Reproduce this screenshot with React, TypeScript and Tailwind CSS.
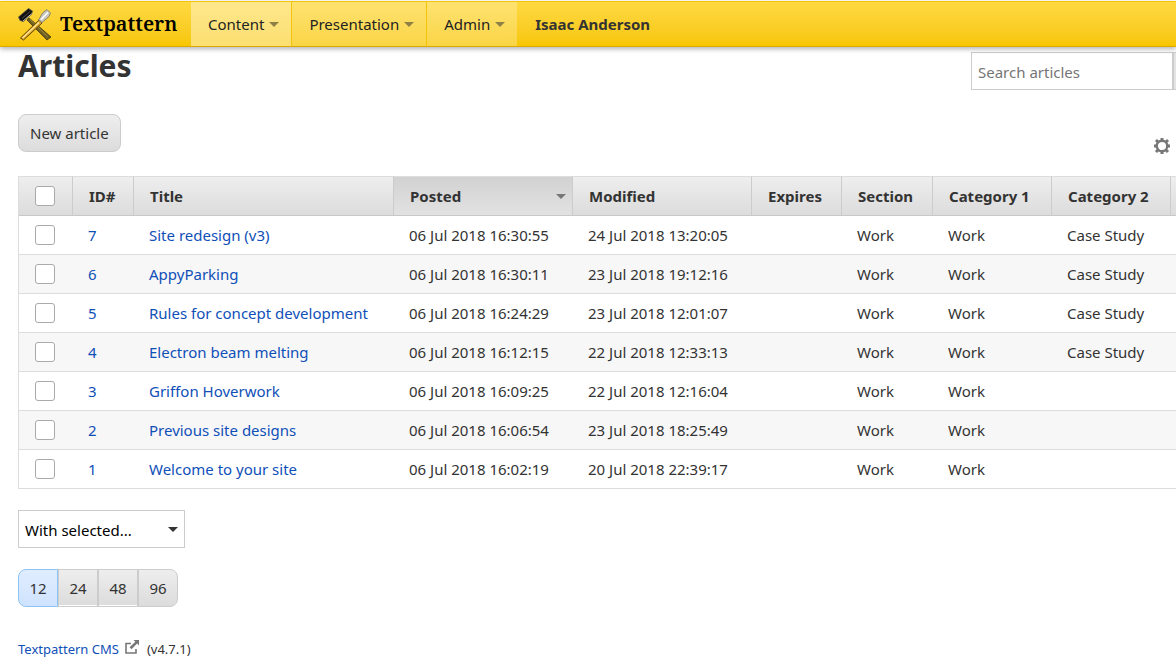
import React from "react";

type Article = {
  id: number;
  title: string;
  posted: string;
  modified: string;
  category2: string;
};

const articles: Article[] = [
  { id: 7, title: "Site redesign (v3)", posted: "06 Jul 2018 16:30:55", modified: "24 Jul 2018 13:20:05", category2: "Case Study" },
  { id: 6, title: "AppyParking", posted: "06 Jul 2018 16:30:11", modified: "23 Jul 2018 19:12:16", category2: "Case Study" },
  { id: 5, title: "Rules for concept development", posted: "06 Jul 2018 16:24:29", modified: "23 Jul 2018 12:01:07", category2: "Case Study" },
  { id: 4, title: "Electron beam melting", posted: "06 Jul 2018 16:12:15", modified: "22 Jul 2018 12:33:13", category2: "Case Study" },
  { id: 3, title: "Griffon Hoverwork", posted: "06 Jul 2018 16:09:25", modified: "22 Jul 2018 12:16:04", category2: "" },
  { id: 2, title: "Previous site designs", posted: "06 Jul 2018 16:06:54", modified: "23 Jul 2018 18:25:49", category2: "" },
  { id: 1, title: "Welcome to your site", posted: "06 Jul 2018 16:02:19", modified: "20 Jul 2018 22:39:17", category2: "" },
];

function Caret({ className }: { className: string }) {
  return (
    <svg viewBox="0 0 10 5" className={`h-[5px] w-[10px] shrink-0 ${className}`} aria-hidden="true">
      <path d="M0 0h10L5 5z" fill="currentColor" />
    </svg>
  );
}

function Logo() {
  return (
    <svg viewBox="0 0 34 34" className="h-[34px] w-[34px] shrink-0" aria-hidden="true">
      <path d="M11 11L33 30L29 33L9 13z" fill="#6f5f22" stroke="#3d3410" strokeWidth="0.800" />
      <path d="M12 12.500L29.500 29.500" stroke="#a08d3c" strokeWidth="1" />
      <path d="M0.500 10L10.500 1.500L14.500 4L13.500 7.200L5.500 14.500L2 13.500z" fill="#111" stroke="#55534c" strokeWidth="0.800" />
      <path d="M4 11.500L12 4.500" stroke="#4a4a4a" strokeWidth="1" />
      <path d="M5 14L13.500 6.800" stroke="#c9c5b4" strokeWidth="1" />
      <path d="M21 13L24 16L5.500 33L2.500 31z" fill="#e0a82c" stroke="#5f4508" strokeWidth="1" />
      <path d="M4.500 31L21 15.500" stroke="#ffe79a" strokeWidth="1.200" />
      <path d="M20.500 13L24.500 6L29 2.500L32.500 6L31 9.500L24 15.500z" fill="#c9c6bd" stroke="#77735f" strokeWidth="0.800" />
      <path d="M23 12.500L30 5.500" stroke="#fff" strokeWidth="1.600" />
    </svg>
  );
}

function Header() {
  return (
    <header className="relative z-10 mt-px flex h-[46px] items-stretch border-t border-b border-t-[#f5c40a] border-b-[#dba900] bg-linear-to-b from-[#ffd940] to-[#f7c600] shadow-[0_2px_5px_rgba(0,0,0,0.3)]">
      <a href="#home" className="flex w-[191px] items-center gap-2 pl-[18px] font-['Noto_Serif','DejaVu_Serif_Condensed','DejaVu_Serif',serif] text-xl font-semibold text-black">
        <Logo />
        Textpattern
      </a>
      <nav className="flex text-[15px] text-[#222]">
        <button className="flex items-center gap-[5px] border-r border-[#f5c40a] bg-linear-to-b from-[#ffe78c] to-[#fbdf70] pr-3 pl-[17px]">
          Content
          <Caret className="text-[#8f8146]" />
        </button>
        <button className="flex items-center gap-[5px] border-r border-[#f5c40a] bg-linear-to-b from-[#ffe270] to-[#f9d544] pr-3 pl-[17px]">
          Presentation
          <Caret className="text-[#8f8146]" />
        </button>
        <button className="flex items-center gap-[5px] bg-linear-to-b from-[#ffe270] to-[#f9d544] pr-3 pl-[17px]">
          Admin
          <Caret className="text-[#8f8146]" />
        </button>
      </nav>
      <a href="#profile" className="flex items-center pl-[18px] text-[15px] font-bold text-[#333]">
        Isaac Anderson
      </a>
    </header>
  );
}

const box = "block size-5 appearance-none rounded-[3px] border border-[#aaa] bg-white checked:bg-[#0f4fb8]";
const th = "border-t border-r border-b border-t-[#ddd] border-r-[#ccc] border-b-[#c8c8c8] bg-linear-to-b from-[#eee] to-[#dcdcdc] pl-4 text-left font-bold";
const td = "border-b border-[#ddd] pl-[15px]";

function ArticleTable() {
  return (
    <div className="overflow-hidden">
      <table className="w-full table-fixed border-separate border-spacing-0 border-l border-[#ddd] text-[15px] leading-5 whitespace-nowrap">
        <colgroup>
          <col className="w-[54px]" />
          <col className="w-[61px]" />
          <col className="w-[260px]" />
          <col className="w-[179px]" />
          <col className="w-[179px]" />
          <col className="w-[90px]" />
          <col className="w-[91px]" />
          <col className="w-[119px]" />
          <col className="w-[119px]" />
          <col />
        </colgroup>
        <thead>
          <tr className="h-10">
            <th className={th}>
              <input type="checkbox" aria-label="Select all articles" className={box} />
            </th>
            <th className={th}>ID#</th>
            <th className={th}>Title</th>
            <th className="border-t border-r border-b border-t-[#ddd] border-r-[#ccc] border-b-[#c8c8c8] bg-linear-to-b from-[#d2d2d2] to-[#e2e2e2] pr-[6px] pl-4 text-left font-bold">
              <span className="flex items-center justify-between">
                Posted
                <Caret className="text-[#777]" />
              </span>
            </th>
            <th className={th}>Modified</th>
            <th className={th}>Expires</th>
            <th className={th}>Section</th>
            <th className={th}>Category 1</th>
            <th className={th}>Category 2</th>
            <td className="border-t border-b border-t-[#ddd] border-b-[#c8c8c8] bg-linear-to-b from-[#eee] to-[#dcdcdc]" />
          </tr>
        </thead>
        <tbody>
          {articles.map((a) => (
            <tr key={a.id} className="h-[39px] even:bg-[#f7f7f7]">
              <td className="border-b border-[#ddd] pl-4">
                <input type="checkbox" aria-label={`Select ${a.title}`} className={box} />
              </td>
              <td className={td}>
                <a href={`#article-${a.id}`} className="text-[#0f4fb8]">{a.id}</a>
              </td>
              <td className={td}>
                <a href={`#article-${a.id}`} className="text-[#0f4fb8]">{a.title}</a>
              </td>
              <td className={td}>{a.posted}</td>
              <td className={td}>{a.modified}</td>
              <td className={td} />
              <td className={td}>Work</td>
              <td className={td}>Work</td>
              <td className={td}>{a.category2}</td>
              <td className="border-b border-[#ddd]" />
            </tr>
          ))}
        </tbody>
      </table>
    </div>
  );
}

const pageSize = "w-10 border border-[#ccc] bg-linear-to-b from-[#eee] to-[#dcdcdc] shadow-[inset_0_-1px_#fff]";

export default function App() {
  return (
    <div className="overflow-x-hidden bg-white font-['Noto_Sans','Open_Sans',sans-serif] text-[15px] text-[#333]">
      <Header />
      <main className="pt-[5px] pl-[18px]">
        <div className="flex items-start justify-between">
          <h1 className="text-[30px] leading-7 font-bold">Articles</h1>
          <form className="flex h-[38px]" onSubmit={(e) => e.preventDefault()}>
            <input
              type="search"
              aria-label="Search articles"
              placeholder="Search articles"
              className="w-[202px] border border-[#ccc] px-[6px] pt-0.5 placeholder:text-[#757575]"
            />
            <button aria-label="Search options" className="w-[3px] border-y border-l border-[#ccc] bg-[#e4e4e4]" />
          </form>
        </div>
        <div className="mt-6 flex items-end justify-between pr-[6px]">
          <button className="h-[38px] rounded-lg border border-[#ccc] bg-linear-to-b from-[#eee] to-[#dcdcdc] px-[11px]">
            New article
          </button>
          <button aria-label="Choose columns" className="-mb-[2px] text-[#777]">
            <svg viewBox="0 0 16 16" className="size-4" aria-hidden="true">
              <circle cx="8" cy="8" r="5.300" fill="none" stroke="currentColor" strokeWidth="2.400" />
              <path
                d="M8 0v2.500M8 13.500v2.500M0 8h2.500M13.500 8h2.500M2 2l2 2M12 12l2 2M2 14l2-2M12 4l2-2"
                stroke="currentColor"
                strokeWidth="3"
              />
            </svg>
          </button>
        </div>
        <div className="mt-6">
          <ArticleTable />
        </div>
        <div className="relative mt-[21px] w-[167px]">
          <select aria-label="With selected" className="block h-[38px] w-full appearance-none border border-[#ccc] bg-white pt-0.5 pl-[6px] text-black">
            <option>With selected...</option>
          </select>
          <Caret className="pointer-events-none absolute top-[17px] right-[7px] text-[#333]" />
        </div>
        <div className="mt-[21px] flex h-[38px]">
          <button className="w-10 rounded-l-lg border border-[#8cc4f5] bg-linear-to-b from-[#e0edff] to-[#cfe3ff]">12</button>
          <button className={pageSize}>24</button>
          <button className={pageSize}>48</button>
          <button className="w-10 rounded-r-lg border border-[#ccc] bg-linear-to-b from-[#eee] to-[#dcdcdc]">96</button>
        </div>
        <footer className="mt-8 flex items-center text-[13px] leading-5">
          <a href="#cms" className="flex items-center gap-[6px] text-[#0f4fb8]">
            Textpattern CMS
            <svg viewBox="0 0 14 14" className="-mt-1 size-[14px] text-[#777]" aria-hidden="true">
              <path d="M6 3.500H1v9.500h10V9" fill="none" stroke="currentColor" strokeWidth="1.600" />
              <path d="M8.500 0H14v5.500l-1.900-1.900-5.600 5.600-1.900-1.900L10.300 1.800z" fill="currentColor" />
            </svg>
          </a>
          <span className="ml-2">(v4.7.1)</span>
        </footer>
      </main>
    </div>
  );
}
